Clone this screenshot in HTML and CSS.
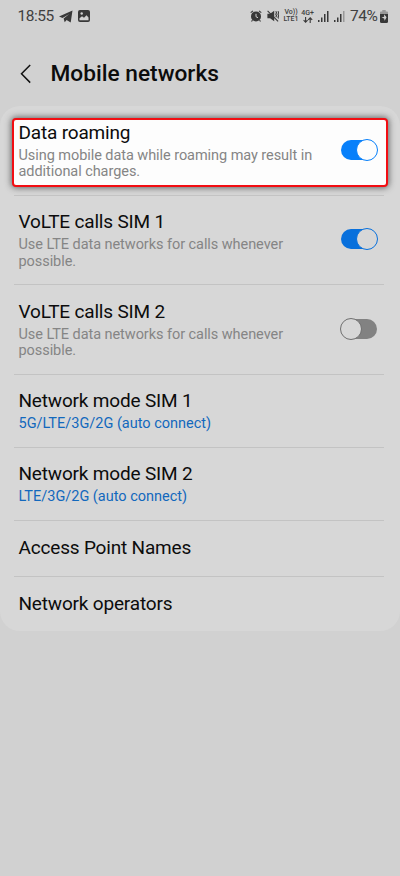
FILE: index.html
```
<!DOCTYPE html>
<html lang="en">
<head>
<meta charset="utf-8">
<title>Mobile networks</title>
<link rel="stylesheet" href="styles.css">
</head>
<body>
<div class="status">
  <span class="time">18:55</span>
  <svg class="plane" width="14" height="13" viewBox="0 0 14 13"><path d="M0 6.600 13.500.4 11.700 12.600 7.600 9.900 5.700 12.300 4.600 8.600 10.300 4 3.500 8z"/></svg>
  <svg class="photo" width="12" height="12" viewBox="0 0 12 12"><rect width="12" height="12" rx="2"/><path class="cut" d="M1.500 10.200V8.300L4 6.200l2 1.600 2.500-2.600 2 2.200v2.800z"/><circle class="cut" cx="3.700" cy="3.500" r="1.200"/></svg>
  <span class="fill"></span>
  <svg class="alarm" width="12" height="12" viewBox="0 0 12 12"><circle cx="6" cy="6.400" r="5"/><path class="line" d="M.7 2.700 3 .8M11.300 2.700 9 .8M2.500 10.200l-1 1.300M9.500 10.200l1 1.300"/><path class="cutline" d="M6 3.800v2.900l2 1"/></svg>
  <svg class="mute" width="12" height="12" viewBox="0 0 12 12"><path d="M.4 3.800h2.700L7.200.7v10.600L3.100 8.200H.4z"/><path class="line" d="M.6.8l10.500 10.500M8.800 1.200l.7 1.500-.7 1.500.7 1.600-.7 1.400M11 1.200l.7 1.500-.7 1.500.7 1.600-.7 1.500.7 1.200"/></svg>
  <span class="tiny volte"><span>Vo))</span><span>LTE1</span></span>
  <span class="tiny data"><span>4G+</span><svg width="10" height="6" viewBox="0 0 10 6"><path class="line" d="M2.600 0v5M.6 3.100l2 2 2-2M7.200 6V.8M5.200 2.800l2-2 2 2"/></svg></span>
  <svg class="signal" width="11" height="12" viewBox="0 0 11 12"><path d="M0 10h1.500v2H0zM3 7.500h1.500V12H3zM6 4h1.500v8H6zM9 1h1.500v11H9z"/></svg>
  <svg class="signal second" width="11" height="12" viewBox="0 0 11 12"><path d="M0 10h1.500v2H0zM3 7.500h1.500V12H3zM6 4h1.500v8H6z"/><path class="dim" d="M9 1h1.500v11H9z"/></svg>
  <span class="percent">74%</span>
  <svg class="battery" width="8" height="13" viewBox="0 0 8 13"><path class="dim" d="M2.300 0h3.400v1.500H7a1 1 0 0 1 1 1V5H0V2.500a1 1 0 0 1 1-1h1.300z"/><path d="M0 4h8v7.500A1.500 1.500 0 0 1 6.500 13h-5A1.500 1.500 0 0 1 0 11.500z"/><path class="cut" d="M4 4.300 6.600 7.300 4.600 10.700 4.200 8.500 1.500 7.600 4.200 6.700z"/></svg>
</div>
<header class="header">
  <svg width="12" height="20" viewBox="0 0 12 20"><path d="M10.200 1 1.500 9.800 10.200 18.600"/></svg>
  <h1>Mobile networks</h1>
</header>
<main class="card">
  <section class="row tall active">
    <div class="text"><h2>Data roaming</h2><p>Using mobile data while roaming may result in<br>additional charges.</p></div>
    <span class="switch on"><i></i></span>
  </section>
  <section class="row tall">
    <div class="text"><h2>VoLTE calls SIM 1</h2><p>Use LTE data networks for calls whenever<br>possible.</p></div>
    <span class="switch on"><i></i></span>
  </section>
  <section class="row tall">
    <div class="text"><h2>VoLTE calls SIM 2</h2><p>Use LTE data networks for calls whenever<br>possible.</p></div>
    <span class="switch"><i></i></span>
  </section>
  <section class="row mode">
    <div class="text"><h2>Network mode SIM 1</h2><p>5G/LTE/3G/2G (auto connect)</p></div>
  </section>
  <section class="row mode">
    <div class="text"><h2>Network mode SIM 2</h2><p>LTE/3G/2G (auto connect)</p></div>
  </section>
  <section class="row single"><div class="text"><h2>Access Point Names</h2></div></section>
  <section class="row single last"><div class="text"><h2>Network operators</h2></div></section>
</main>
</body>
</html>
```

FILE: styles.css
```
*, *::before, *::after { box-sizing: border-box; }
body { margin: 0; height: 876px; background: #d1d1d1; font-family: Roboto, sans-serif; color: #0c0c0c; overflow: hidden; }
h1, h2, p { margin: 0; white-space: nowrap; }
.status { display: flex; align-items: center; height: 32px; padding: 0 12px 0 17.500px; color: #404040; }
.status svg { flex: none; fill: #383838; }
.status .cut { fill: #d1d1d1; }
.status .dim { fill: #999; }
.status .line { fill: none; stroke: #383838; stroke-width: 1.100; }
.cutline { fill: none; stroke: #d1d1d1; stroke-width: 1; }
.time { width: 37px; font-size: 15.500px; letter-spacing: -.45px; }
.plane { margin-left: 4.500px; }
.photo { margin-left: 5px; }
.fill { flex: 1; }
.mute { margin-left: 5px; }
.tiny { display: flex; flex-direction: column; align-items: center; flex: none; font-size: 7px; line-height: 7px; font-weight: 500; }
.volte { width: 16px; margin-left: 4px; }
.data { width: 13px; margin-left: 2px; }
.signal { margin-left: 4px; }
.second { margin-left: 5px; }
.percent { width: 30px; margin-left: 5px; font-size: 15.500px; letter-spacing: -.4px; }
.header { display: flex; align-items: center; height: 74px; padding: 10px 0 0 20px; }
.header svg { fill: none; stroke: #111; stroke-width: 1.500; }
h1 { margin-left: 18.500px; font-size: 22.700px; line-height: 28px; font-weight: 500; }
.card { height: 525px; border-radius: 20px; background: #d7d7d7; }
.row { position: relative; display: flex; justify-content: space-between; padding: 0 23px 0 18.500px; }
.row::after { content: ""; position: absolute; left: 14px; right: 16px; bottom: 0; height: 1px; background: #c3c3c3; }
.last::after { display: none; }
.tall { height: 89.500px; padding-top: 15.500px; }
.mode { height: 73px; padding-top: 15.500px; }
.single { height: 56px; padding-top: 16.500px; }
.text { position: relative; }
h2 { font-size: 19px; line-height: 22px; font-weight: 400; letter-spacing: -.18px; }
p { margin-top: 4px; font-size: 14.500px; line-height: 16.500px; letter-spacing: -.06px; color: #858585; }
.mode p { letter-spacing: 0; color: #1268bd; }
.active::before { content: ""; position: absolute; left: 12px; right: 12px; top: 12px; height: 69px; border: 2px solid #f20d12; border-radius: 4px; background: #fdfdfd; box-shadow: 0 0 6px 1px #666; }
.switch { position: relative; width: 36px; height: 20px; margin-top: 18px; border-radius: 10px; background: #828282; }
.switch i { position: absolute; top: -1px; left: -1px; width: 22px; height: 22px; border: 1px solid #707070; border-radius: 50%; background: #d7d7d7; }
.on { background: #0870dc; }
.on i { left: 15px; border-color: #0870dc; }
.active .on { background: #0880fa; }
.active i { background: #fdfdfd; border-color: #0880fa; }
```
